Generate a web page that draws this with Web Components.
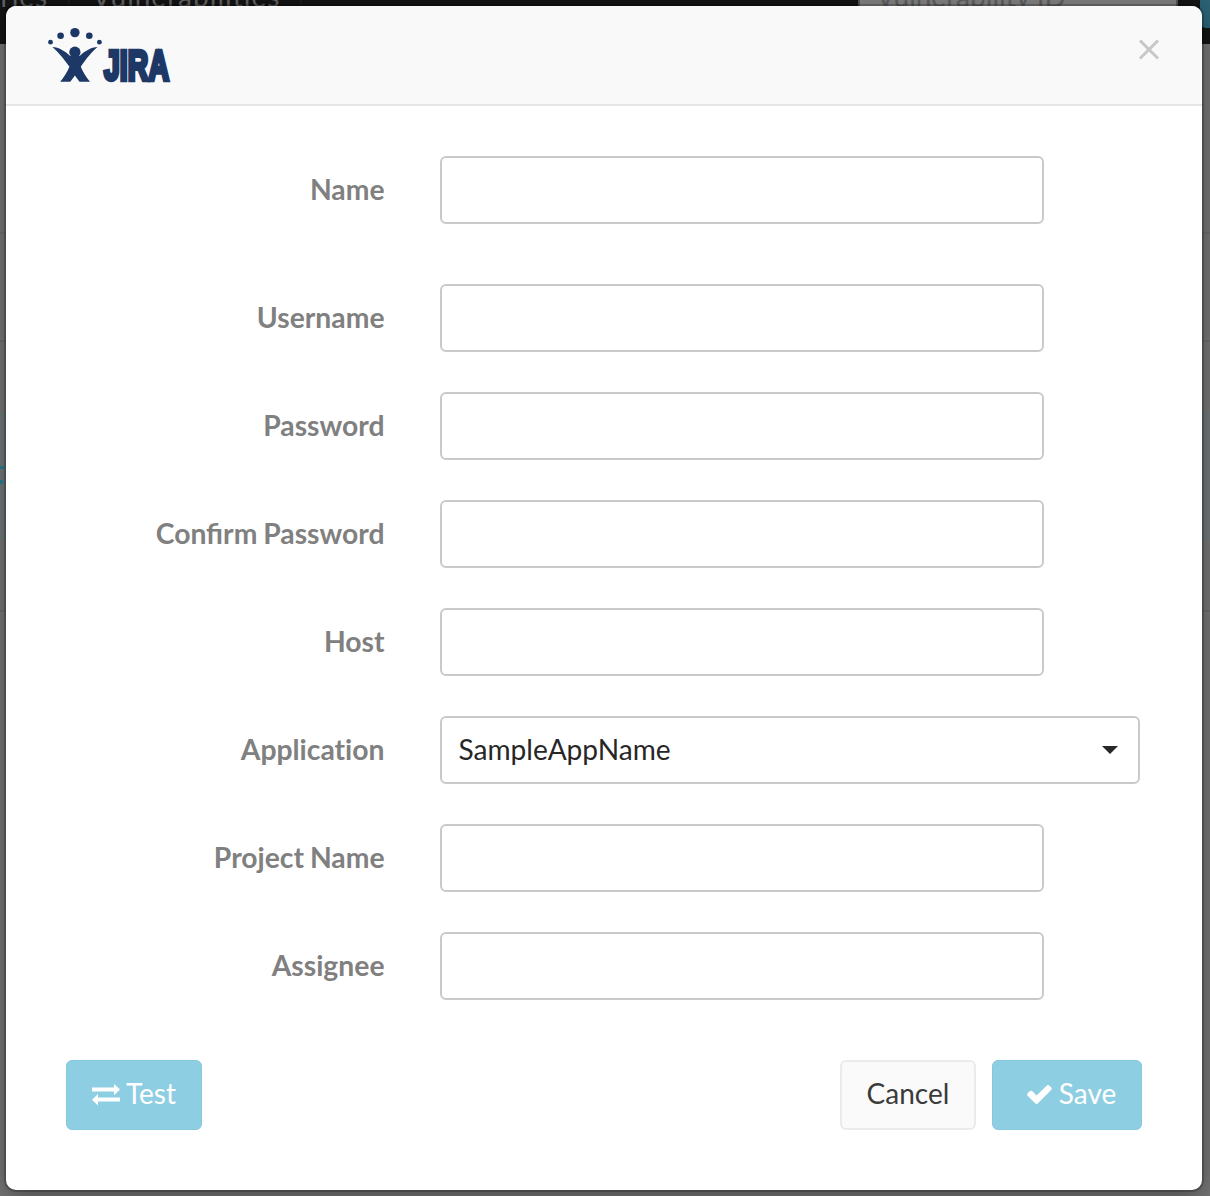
<!DOCTYPE html>
<html lang="en">
<head>
<meta charset="utf-8">
<title>JIRA</title>
<style>
html,body{margin:0;width:1210px;height:1196px;overflow:hidden}
body{font-family:Lato,"Open Sans",sans-serif;font-size:28px;position:relative;background:#707070}
</style>
</head>
<body>
<app-backdrop></app-backdrop>
<modal-dialog>
  <jira-logo slot="title"></jira-logo>
  <form-row label="Name" class="lead"></form-row>
  <form-row label="Username"></form-row>
  <form-row label="Password" type="password"></form-row>
  <form-row label="Confirm Password" type="password"></form-row>
  <form-row label="Host"></form-row>
  <form-row label="Application" value="SampleAppName" style="font-variant-ligatures:none"></form-row>
  <form-row label="Project Name"></form-row>
  <form-row label="Assignee"></form-row>
  <action-button slot="left" kind="primary" style="width:136px;--gap:6px"><svg slot="icon" width="28" height="22" viewBox="0 0 28 22" fill="#fff"><path d="M0 3.4h22V0L28 5.5 22 11.2V7.4H0zM28 13.4H6V10L0 15.7 6 21.4V17.4H28z"/></svg>Test</action-button>
  <action-button slot="right" kind="plain" style="width:136px">Cancel</action-button>
  <action-button slot="right" kind="primary" style="width:150px;--gap:7px;--lead:9px"><svg slot="icon" width="25" height="20" viewBox="0 0 25 20" fill="#fff"><path d="M24.1 5.1 11 18.3q-1.4 1.2-2.8 0L.8 10.9q-1.2-1.4 0-2.8l1.8-1.8q1.4-1.2 2.8 0l4.2 4.2 10-9.8q1.4-1.2 2.8 0l1.7 1.6q1.2 1.4 0 2.8z"/></svg>Save</action-button>
</modal-dialog>
<script>
class BaseElement extends HTMLElement {
  render(html) { this.attachShadow({mode: 'open'}).innerHTML = html; }
}

customElements.define('app-backdrop', class extends BaseElement {
  connectedCallback() {
    this.render(`<style>
      :host{display:flex;flex-direction:column;width:1210px;height:1196px;overflow:hidden;background:#747474}
      nav{display:flex;flex:none;height:44px;background:#141414;color:#626262;align-items:flex-start;line-height:34px;overflow:hidden}
      nav span{margin-top:-21px;white-space:nowrap}
      nav>div{box-sizing:border-box;flex:none;height:44px;display:flex}
      .first{width:70px;border-right:2px solid #1c1c1c;justify-content:flex-end;letter-spacing:.9px}
      .first span{margin-right:20px}
      .second{width:232px;padding-left:22px;border-right:2px solid #1c1c1c;letter-spacing:1px}
      nav .search{margin-left:556px;width:320px;padding-left:16px;background:#808080;border:solid #555;border-width:0 2px;color:#5e5e5e}
      nav .go{margin-left:22px;width:30px;height:28px;background:#2b6274;border-radius:0 0 0 6px}
      section{flex:none;box-sizing:border-box;border-bottom:2px solid #6b6b6b}
      .selected{background:#6f7778;border:0;display:flex;align-items:flex-start;padding-top:54px}
      .selected svg{display:block}
    </style>
    <nav><div class="first"><span>ries</span></div><div class="second"><span>Vulnerabilities</span></div><div class="search"><span>Vulnerability ID</span></div><div class="go"></div></nav>
    <section style="height:190px"></section>
    <section style="height:108px"></section>
    <section style="height:70px;border:0"></section>
    <section class="selected" style="height:128px"><svg width="6" height="20"><path d="M0 0h4v3H0zM0 14h2l2 1.5L2 18H0z" fill="#287d94"/></svg></section>
    <section style="height:72px"></section>`);
  }
});

customElements.define('modal-dialog', class extends BaseElement {
  connectedCallback() {
    this.render(`<style>
      :host{position:absolute;left:6px;top:6px;width:1196px;height:1184px;display:flex;flex-direction:column;box-sizing:border-box;background:#fff;border-radius:10px;box-shadow:0 0 0 2px rgba(0,0,0,.2),0 6px 24px rgba(0,0,0,.36)}
      header{height:100px;box-sizing:border-box;flex:none;display:flex;justify-content:space-between;padding:21px 42px 0 41px;background:#f9f9f9;border-bottom:2px solid #e5e5e5;border-radius:10px 10px 0 0}
      .close{width:22px;height:22px;margin-top:11px}
      main{display:flex;flex-direction:column;gap:40px;padding-top:50px}
      ::slotted(.lead){margin-bottom:20px}
      footer{display:flex;justify-content:space-between;padding:60px 60px 0}
      .group{display:flex;gap:16px}
    </style>
    <header><slot name="title"></slot><svg class="close" viewBox="0 0 22 22"><path d="m2 2.5 18 18M20 2.5 2 20.5" stroke="#c7c7c7" stroke-width="3"/></svg></header>
    <main><slot></slot></main>
    <footer><div class="group"><slot name="left"></slot></div><div class="group"><slot name="right"></slot></div></footer>`);
  }
});

customElements.define('jira-logo', class extends BaseElement {
  connectedCallback() {
    this.render(`<style>:host{display:block;width:124px;height:58px}svg{display:block}</style>
    <svg width="124" height="58" viewBox="47 27 124 58" fill="#1d3866">
      <circle cx="50.5" cy="42.2" r="2.4"/><circle cx="60.6" cy="35.7" r="3.3"/><circle cx="74.9" cy="32.6" r="4.7"/><circle cx="89.3" cy="35.7" r="3.3"/><circle cx="99.4" cy="42.2" r="2.4"/>
      <circle cx="74.9" cy="52.2" r="5.6"/>
      <path d="M52.3 47.1C59 47.4 64.5 51 70 55.8L74.9 57 79.8 55.8C85.3 51 91 47.4 97.5 47.1 92.5 51 86 59 80.8 66.8c2.2 5.3 5.4 10.4 9.2 14.9H79.5L74.9 75.5 70.3 81.7H60.2c3.8-4.5 7-9.6 9.2-14.9C63.8 59 57.5 51 52.3 47.1z"/>
      <g transform="translate(103.9 80) scale(.66 1)" stroke="#1d3866" stroke-width="4.4" stroke-linejoin="miter" font-family="'Liberation Sans',Arial,sans-serif" font-weight="700" font-size="43"><text x="0" y="0" textLength="98.5" lengthAdjust="spacing">JIRA</text></g>
    </svg>`);
  }
});

customElements.define('form-row', class extends BaseElement {
  connectedCallback() {
    const value = this.getAttribute('value');
    const control = value
      ? `<div class="select"><span>${value}</span><svg width="16" height="8"><path d="M0 0h16L8 8z" fill="#272727"/></svg></div>`
      : `<input type="${this.getAttribute('type') || 'text'}" aria-label="${this.getAttribute('label')}">`;
    this.render(`<style>
      :host{display:flex;height:68px;align-items:center;gap:56px}
      label{width:378.5px;margin-right:-.5px;text-align:right;font-weight:700;font-size:28.3px;word-spacing:-1px;color:#808080;line-height:34px;padding-bottom:2px}
      input,.select{box-sizing:border-box;height:68px;width:604px;border:2px solid #c9c9c9;border-radius:6px;background:#fff;outline:0;margin:0;padding:0 16px;font:inherit}
      .select{width:700px;display:flex;align-items:center;justify-content:space-between;color:#272727;padding:0 20px 0 16.5px;line-height:34px;font-size:28.1px}
      .select span{padding-bottom:2px}
    </style><label>${this.getAttribute('label')}</label>${control}`);
  }
});

customElements.define('action-button', class extends BaseElement {
  connectedCallback() {
    const primary = this.getAttribute('kind') === 'primary';
    this.render(`<style>
      :host{display:block;height:70px}
      button{width:100%;height:70px;box-sizing:border-box;margin:0;border-radius:6px;display:flex;align-items:center;justify-content:center;gap:var(--gap,0);padding:0 0 4px var(--lead,0);font:inherit;line-height:34px;
      ${primary ? 'background:#8ecee3;color:#fff;border:1px solid #88c8de' : 'background:#fafafa;color:#3b3b3b;border:2px solid #ebebeb'}}
      ::slotted(svg){flex:none;margin-top:4px}
    </style><button><slot name="icon"></slot><span><slot></slot></span></button>`);
  }
});
</script>
</body>
</html>
